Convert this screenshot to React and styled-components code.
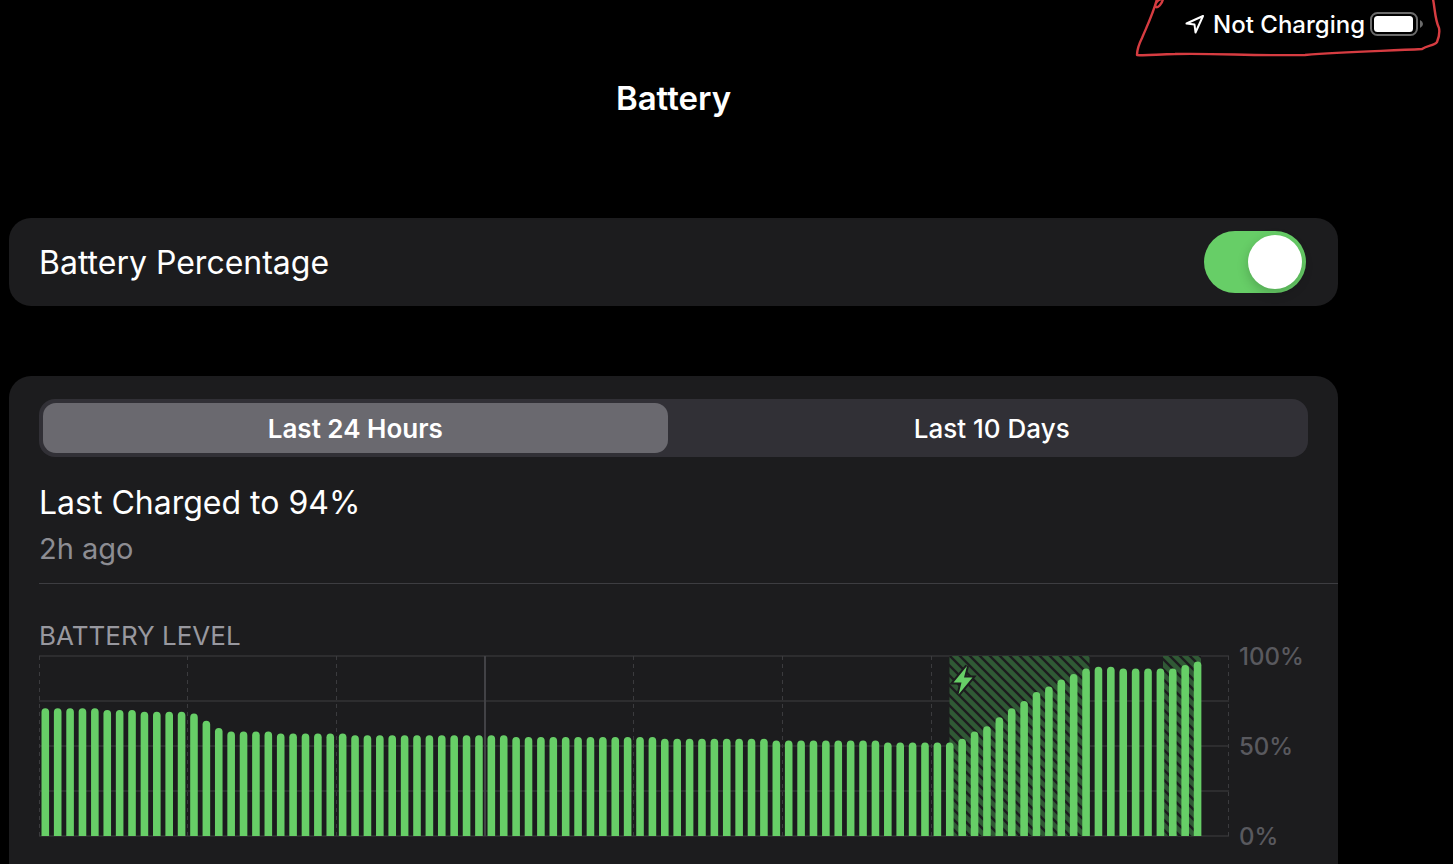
import { useState } from "react";
import styled, { createGlobalStyle } from "styled-components";

const GlobalStyle = createGlobalStyle`
  * {
    box-sizing: border-box;
  }

  body {
    margin: 0;
    background: #000;
    color: #fff;
    font-family: Inter, "Liberation Sans", sans-serif;
  }
`;

const Page = styled.div`
  position: relative;
  display: flex;
  flex-direction: column;
  min-height: 100vh;
  overflow: hidden;
`;

const StatusBar = styled.div`
  display: flex;
  align-items: center;
  justify-content: flex-end;
  height: 48px;
  padding-right: 30px;
`;

const StatusText = styled.span`
  margin: 0 5px 0 8px;
  font-size: 24px;
  font-weight: 500;
`;

const Scribble = styled.svg`
  position: absolute;
  top: 0;
  right: 8px;
  pointer-events: none;
`;

const Main = styled.main`
  display: flex;
  flex: 1;
  flex-direction: column;
  margin: 0 115px 0 9px;
`;

const Title = styled.h1`
  margin: 30px 0 100px;
  font-size: 33px;
  font-weight: 600;
  line-height: 40px;
  text-align: center;
`;

const ToggleRow = styled.label`
  display: flex;
  align-items: center;
  justify-content: space-between;
  height: 88px;
  margin-bottom: 70px;
  padding: 0 32px 0 30px;
  background: #1c1c1e;
  border-radius: 22px;
  font-size: 32px;
`;

const Switch = styled.input`
  appearance: none;
  display: flex;
  align-items: center;
  width: 102px;
  height: 62px;
  margin: 0;
  padding: 4px;
  background: #39393d;
  border-radius: 31px;

  &::before {
    content: "";
    width: 54px;
    height: 54px;
    background: #fff;
    border-radius: 50%;
    box-shadow: 0 4px 12px rgba(0, 0, 0, 0.2);
  }

  &:checked {
    justify-content: flex-end;
    background: #67ce67;
  }
`;

const Panel = styled.section`
  flex: 1;
  padding: 23px 0 0 30px;
  background: #1c1c1e;
  border-radius: 22px 22px 0 0;
`;

const Segments = styled.div`
  display: flex;
  gap: 12px;
  height: 58px;
  margin-right: 30px;
  padding: 4px;
  background: #313036;
  border-radius: 16px;
`;

const Segment = styled.button`
  flex: 1;
  padding: 0;
  border: none;
  border-radius: 13px;
  background: ${({ $active }) => ($active ? "#6a696f" : "transparent")};
  color: #fff;
  font-family: inherit;
  font-size: 26px;
  font-weight: ${({ $active }) => ($active ? 600 : 500)};
`;

const Charged = styled.div`
  padding: 24px 0 10px;
  border-bottom: 1px solid #3d3d41;
`;

const ChargedTitle = styled.p`
  margin: 0;
  font-size: 32px;
  line-height: 44px;
`;

const ChargedTime = styled.p`
  margin: 0;
  color: #8d8d93;
  font-size: 29px;
  line-height: 48px;
`;

const ChartTitle = styled.h2`
  margin: 36px 0 3px;
  color: #98989f;
  font-size: 26px;
  font-weight: 400;
  line-height: 32px;
  text-transform: uppercase;
`;

const ChartRow = styled.div`
  display: flex;
  align-items: center;
  padding-right: 34px;
`;

const ChartArea = styled.svg`
  display: block;
  flex: 1;
  min-width: 0;
  margin-right: 10px;
`;

const Scale = styled.div`
  display: flex;
  flex-direction: column;
  align-self: stretch;
  justify-content: space-between;
  width: 65px;
  margin: -13px 0 -15px;
  color: #59595e;
  font-size: 24px;
  font-weight: 500;
  line-height: 30px;
`;

const levels = [
  71, 71, 71, 71, 71, 70, 70, 70, 69, 69, 69, 69, 68, 64, 60, 58, 58, 58, 58,
  57, 57, 57, 57, 57, 57, 56, 56, 56, 56, 56, 56, 56, 56, 56, 56, 56, 56, 56,
  55, 55, 55, 55, 55, 55, 55, 55, 55, 55, 55, 55, 54, 54, 54, 54, 54, 54, 54,
  54, 54, 53, 53, 53, 53, 53, 53, 53, 53, 53, 52, 52, 52, 52, 52, 52, 54, 58,
  61, 66, 71, 75, 80, 83, 87, 90, 93, 94, 94, 93, 93, 93, 93, 93, 95, 97,
];

const charging = [
  { x: 910.5, width: 140 },
  { x: 1124, width: 38 },
];

const SLOT = 12.39;
const BAR = 7.6;
const BASE = 181;

const barPath = (level, i) => {
  const x = 6.3 + i * SLOT - BAR / 2;
  const r = BAR / 2;
  const top = BASE - level * 1.8;
  return `M${x} ${BASE}V${top + r}a${r} ${r} 0 0 1 ${BAR} 0V${BASE}z`;
};

const BatteryChart = () => (
  <ChartArea viewBox="0 0 1190 182" role="img" aria-label="Battery level">
    <defs>
      <pattern id="hatch" width="10" height="10" patternUnits="userSpaceOnUse">
        <rect width="10" height="10" fill="#305935" />
        <path
          d="M-2 -2L12 12M-2 8L2 12M8 -2L12 2"
          stroke="#1c1c1e"
          strokeWidth="2.4"
        />
      </pattern>
    </defs>
    {[0, 45, 90, 135, 180].map((y) => (
      <rect key={y} y={y} width="1190" height="2" fill="#2d2d2f" />
    ))}
    {[0.5, 148.5, 297.5, 594.5, 743.5, 892.5, 1189.5].map((x) => (
      <path
        key={x}
        d={`M${x} 1V181`}
        stroke="#3b3b3e"
        strokeDasharray="4 4"
      />
    ))}
    <path d="M446 1V181" stroke="#424246" strokeWidth="2" />
    {charging.map(({ x, width }) => (
      <rect key={x} x={x} y="1" width={width} height="180" fill="url(#hatch)" />
    ))}
    {levels.map((level, i) => (
      <path key={i} d={barPath(level, i)} fill="#67ce67" />
    ))}
    <path
      d="M928 11L914.5 27.500H922.500L919.500 39.500L933.500 22.500H925z"
      fill="#67ce67"
      stroke="#1c1c1e"
      strokeWidth="4"
      paintOrder="stroke"
    />
  </ChartArea>
);

const App = () => {
  const [percentage, setPercentage] = useState(true);
  const [range, setRange] = useState("Last 24 Hours");

  return (
    <>
      <GlobalStyle />
      <Page>
        <StatusBar>
          <svg width="20" height="20" viewBox="0 0 20 20" fill="none">
            <path
              d="M18 2L1.5 9.5L9.5 10.5L10.5 18.5z"
              stroke="#fff"
              strokeWidth="2"
              strokeLinejoin="round"
            />
          </svg>
          <StatusText>Not Charging</StatusText>
          <svg width="53" height="24" viewBox="0 0 53 24">
            <rect
              x="1"
              y="1"
              width="46"
              height="22"
              rx="6.5"
              fill="none"
              stroke="#6b6b6b"
              strokeWidth="2"
            />
            <rect x="4" y="4" width="39" height="16" rx="3.5" fill="#fff" />
            <path d="M50 8Q53 9.5 53 12T50 16z" fill="#6b6b6b" />
          </svg>
        </StatusBar>
        <Main>
          <Title>Battery</Title>
          <ToggleRow>
            Battery Percentage
            <Switch
              type="checkbox"
              role="switch"
              checked={percentage}
              onChange={(e) => setPercentage(e.target.checked)}
            />
          </ToggleRow>
          <Panel>
            <Segments>
              {["Last 24 Hours", "Last 10 Days"].map((label) => (
                <Segment
                  key={label}
                  type="button"
                  $active={range === label}
                  aria-pressed={range === label}
                  onClick={() => setRange(label)}
                >
                  {label}
                </Segment>
              ))}
            </Segments>
            <Charged>
              <ChargedTitle>Last Charged to 94%</ChargedTitle>
              <ChargedTime>2h ago</ChargedTime>
            </Charged>
            <ChartTitle>Battery Level</ChartTitle>
            <ChartRow>
              <BatteryChart />
              <Scale>
                <span>100%</span>
                <span>50%</span>
                <span>0%</span>
              </Scale>
            </ChartRow>
          </Panel>
        </Main>
        <Scribble width="310" height="60" viewBox="0 0 310 60" fill="none">
          <path
            d="M28 -1C27 4 23 8 21 7C19 5 22 0 26 -1M22 -1C18 14 12 26 7 38C4 44 2 49 2 55C12 56 24 54 40 54C80 53 120 56 170 55C210 52 250 51 287 49C293 45 299 46 302 42C304 37 305 33 304 28C300 20 300 9 298 -1"
            stroke="#d63c41"
            strokeWidth="2.4"
            strokeLinecap="round"
            strokeLinejoin="round"
          />
        </Scribble>
      </Page>
    </>
  );
};

export default App;
